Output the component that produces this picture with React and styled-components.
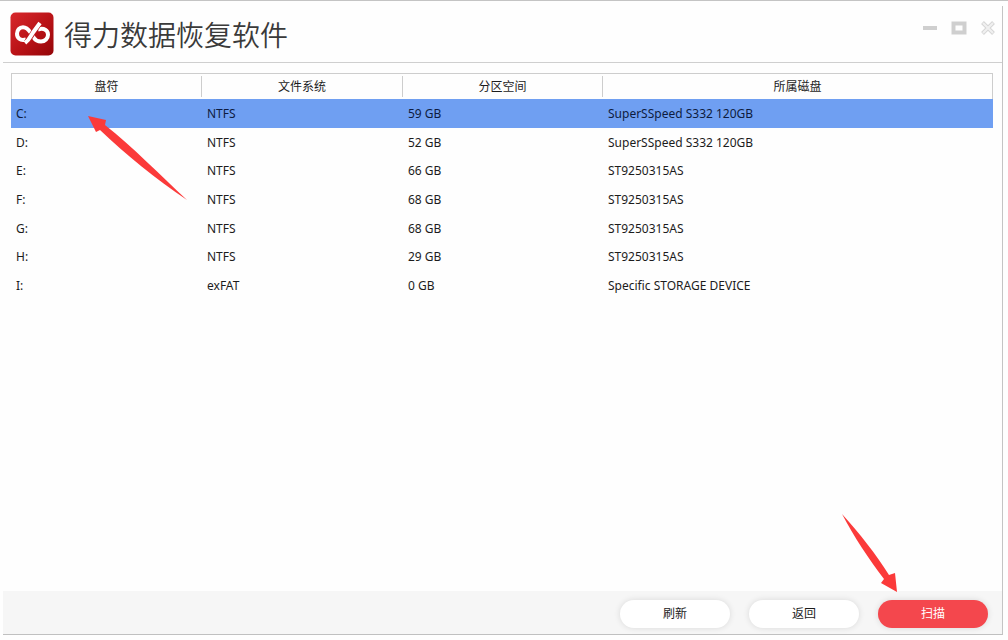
import React, { useState } from 'react';
import styled, { createGlobalStyle } from 'styled-components';

const GlobalStyle = createGlobalStyle`
    * {
        box-sizing: border-box;
    }

    body {
        margin: 0;
        background: #fefefe;
        color: #1c1c1c;
        font-family: "Noto Sans", "Noto Sans CJK SC", sans-serif;
        font-size: 12px;
    }

    button {
        font-family: inherit;
        cursor: pointer;
    }
`;

const Page = styled.div`
    display: flex;
    min-height: 100vh;
    padding: 5px 5px 5px 3px;
    border-top: 1px solid #c4c4c4;
`;

const Frame = styled.div`
    flex: 1;
    display: flex;
    flex-direction: column;
    border-right: 1px solid #c4c4c4;
    border-bottom: 1px solid #c0c0c0;
`;

const Header = styled.header`
    display: flex;
    align-items: flex-start;
    justify-content: space-between;
    height: 57px;
    padding: 6px 6px 6px 7px;
    border-bottom: 1px solid #cfcfcf;
`;

const Brand = styled.div`
    display: flex;
    align-items: center;
    gap: 10px;
`;

const Title = styled.h1`
    margin: 0;
    color: #3a3a3a;
    font-family: "Noto Sans CJK SC", sans-serif;
    font-size: 28px;
    font-weight: 350;
    line-height: 44px;
`;

const WindowButtons = styled.div`
    display: flex;
    gap: 13px;
    padding-top: 8px;
`;

const WindowButton = styled.button`
    display: flex;
    padding: 0;
    border: none;
    background: transparent;
`;

const Content = styled.main`
    flex: 1;
    padding: 10px 9px 10px 8px;
`;

const Table = styled.table`
    width: 100%;
    height: 227px;
    table-layout: fixed;
    border-collapse: separate;
    border-spacing: 0;
`;

const Th = styled.th`
    width: ${({ width }) => width || 'auto'};
    height: 26px;
    padding: 2px 0;
    border-top: 1px solid #cdcdcd;
    font-weight: 400;

    &:first-child {
        border-left: 1px solid #cdcdcd;
    }

    &:last-child {
        border-right: 1px solid #cdcdcd;
    }
`;

const Label = styled.span`
    display: block;
    line-height: 21px;
    border-right: 1px solid #cdcdcd;

    ${Th}:last-child & {
        border-right: none;
    }
`;

const Row = styled.tr`
    background: ${({ $active }) => ($active ? '#6f9ff2' : 'transparent')};
    color: ${({ $active }) => ($active ? '#0e1c40' : 'inherit')};
    cursor: default;
`;

const Td = styled.td`
    padding: 1px 5px 0;
    line-height: 16px;
`;

const Footer = styled.footer`
    position: relative;
    display: flex;
    align-items: flex-start;
    justify-content: flex-end;
    gap: 19px;
    height: 43px;
    padding: 9px 14px 6px;
    background: #f6f6f6;
`;

const Button = styled.button`
    width: 110px;
    height: 28px;
    padding: 0;
    border: none;
    border-radius: 14px;
    background: ${({ $primary }) => ($primary ? '#f4474d' : '#fff')};
    color: ${({ $primary }) => ($primary ? '#fff' : '#1c1c1c')};
    box-shadow: 0 0 6px rgba(0, 0, 0, 0.12);
    font-size: 12px;
    line-height: 28px;
`;

const TableWrap = styled.div`
    position: relative;
`;

const RowArrow = styled.svg`
    position: absolute;
    top: 42px;
    left: 77px;
    pointer-events: none;
`;

const ScanArrow = styled.svg`
    position: absolute;
    right: 104px;
    bottom: 41px;
    pointer-events: none;
`;

const Logo = () => (
    <svg width="44" height="44" viewBox="0 0 44 44" fill="none" aria-hidden="true">
        <defs>
            <linearGradient id="logo" x1="0" y1="0" x2="1" y2="1">
                <stop offset="0" stopColor="#d8282c" />
                <stop offset="0.55" stopColor="#b81216" />
                <stop offset="1" stopColor="#930508" />
            </linearGradient>
        </defs>
        <rect x="0.5" y="0.5" width="43" height="43" rx="5" fill="url(#logo)" />
        <g stroke="#fff" strokeWidth="4">
            <path d="M16 27.500C10 29.500 7 25.500 7 21.800C7 18 9.500 15.200 13 15.200C16.500 15.200 18.500 17.500 20.500 20.500L24 26C25.500 28.500 28 29.500 31 29.500C35 29.500 38 26.500 38 22.800C38 18.500 34 15.500 28 17.500" />
            <path d="M29 12L16.500 30.500" stroke="#bd171b" strokeWidth="5.600" />
            <path d="M30 11L23 20.500C20.500 24 19.500 27.500 15 31" />
        </g>
    </svg>
);

const volumes = [
    { name: 'C:', fs: 'NTFS', size: '59 GB', disk: 'SuperSSpeed S332 120GB' },
    { name: 'D:', fs: 'NTFS', size: '52 GB', disk: 'SuperSSpeed S332 120GB' },
    { name: 'E:', fs: 'NTFS', size: '66 GB', disk: 'ST9250315AS' },
    { name: 'F:', fs: 'NTFS', size: '68 GB', disk: 'ST9250315AS' },
    { name: 'G:', fs: 'NTFS', size: '68 GB', disk: 'ST9250315AS' },
    { name: 'H:', fs: 'NTFS', size: '29 GB', disk: 'ST9250315AS' },
    { name: 'I:', fs: 'exFAT', size: '0 GB', disk: 'Specific STORAGE DEVICE' },
];

const TitleBar = () => (
    <Header>
        <Brand>
            <Logo />
            <Title>得力数据恢复软件</Title>
        </Brand>
        <WindowButtons>
            <WindowButton aria-label="最小化">
                <svg width="16" height="16" viewBox="0 0 16 16">
                    <path d="M1 8H15" stroke="#cfcfcf" strokeWidth="4" />
                </svg>
            </WindowButton>
            <WindowButton aria-label="最大化">
                <svg width="16" height="16" viewBox="0 0 16 16">
                    <rect x="2.500" y="3.500" width="11" height="9" fill="none" stroke="#cfcfcf" strokeWidth="4" />
                </svg>
            </WindowButton>
            <WindowButton aria-label="关闭">
                <svg width="16" height="16" viewBox="0 0 16 16" fill="none">
                    <path d="M2.500 2.500L13.500 13.500M13.500 2.500L2.500 13.500" stroke="#d6d6d6" strokeWidth="4" />
                    <path d="M3 3L13 13M13 3L3 13" stroke="#f0f0f0" strokeWidth="2" />
                </svg>
            </WindowButton>
        </WindowButtons>
    </Header>
);

const VolumeTable = ({ selected, onSelect }) => (
    <TableWrap>
        <Table>
            <thead>
                <tr>
                    <Th width="191px"><Label>盘符</Label></Th>
                    <Th width="201px"><Label>文件系统</Label></Th>
                    <Th width="200px"><Label>分区空间</Label></Th>
                    <Th><Label>所属磁盘</Label></Th>
                </tr>
            </thead>
            <tbody>
                {volumes.map((v) => (
                    <Row key={v.name} $active={v.name === selected} onClick={() => onSelect(v.name)}>
                        <Td>{v.name}</Td>
                        <Td>{v.fs}</Td>
                        <Td>{v.size}</Td>
                        <Td>{v.disk}</Td>
                    </Row>
                ))}
            </tbody>
        </Table>
        <RowArrow width="100" height="86" viewBox="0 0 100 86" aria-hidden="true">
            <path d="M0 1L18 5L17 10C45 32 72 60 99 85C68 64 38 40 12 15L8 17Z" fill="#fb3a3a" />
        </RowArrow>
    </TableWrap>
);

const App = () => {
    const [selected, setSelected] = useState('C:');

    return (
        <>
            <GlobalStyle />
            <Page>
                <Frame>
                    <TitleBar />
                    <Content>
                        <VolumeTable selected={selected} onSelect={setSelected} />
                    </Content>
                    <Footer>
                        <Button>刷新</Button>
                        <Button>返回</Button>
                        <Button $primary>扫描</Button>
                        <ScanArrow width="56" height="80" viewBox="0 0 56 80" aria-hidden="true">
                            <path d="M0 1C18 21 34 41 47 62L53 60L55 79L39 70L42 66C27 46 12 24 0 1Z" fill="#fb3a3a" />
                        </ScanArrow>
                    </Footer>
                </Frame>
            </Page>
        </>
    );
};

export default App;
